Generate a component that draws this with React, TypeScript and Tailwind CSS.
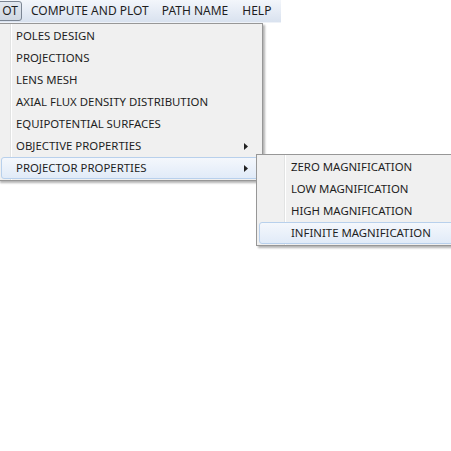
const mainItems = [
  "POLES DESIGN",
  "PROJECTIONS",
  "LENS MESH",
  "AXIAL FLUX DENSITY DISTRIBUTION",
  "EQUIPOTENTIAL SURFACES",
  "OBJECTIVE PROPERTIES",
  "PROJECTOR PROPERTIES",
];

const subItems = ["ZERO MAGNIFICATION", "LOW MAGNIFICATION", "HIGH MAGNIFICATION", "INFINITE MAGNIFICATION"];

function Arrow() {
  return (
    <svg width="4" height="7" viewBox="0 0 4 7" className="shrink-0">
      <path d="M0 0 L4 3.5 L0 7 Z" fill="#222" />
    </svg>
  );
}

export default function App() {
  return (
    <div
      className="relative w-[451px] h-[451px] bg-white overflow-hidden text-[12px] text-[#1e1e1e]"
      style={{ fontFamily: '"Noto Sans", "Liberation Sans", sans-serif' }}
    >
      {/* menu bar */}
      <div className="flex items-center h-[23px] w-[281px] whitespace-nowrap bg-gradient-to-b from-[#f3f6fb] to-[#d9e2ef] border-b border-[#eef2f8]">
        <div className="h-[20px] w-[23px] shrink-0 -ml-[1px] flex items-center justify-end pr-[3px] border border-[#7b8593] rounded-r-[3px] bg-gradient-to-b from-[#e3e8ef] to-[#d0d8e3]">
          OT
        </div>
        <div className="ml-[9px] shrink-0">COMPUTE AND PLOT</div>
        <div className="ml-[13px] shrink-0">PATH NAME</div>
        <div className="ml-[14px] shrink-0">HELP</div>
      </div>

      {/* main dropdown */}
      <div className="absolute left-[-2px] top-[23px] w-[265px] text-[11.4px] bg-[#f0f0f0] border border-[#979797] shadow-[2px_2px_2px_rgba(0,0,0,0.3)] pt-[1px] pb-[1px]">
        <div className="absolute left-[11px] top-0 bottom-0 w-[1px] bg-[#e2e3e3]" />
        <div className="absolute left-[12px] top-0 bottom-0 w-[1px] bg-white" />
        {mainItems.map((t, i) => {
          const active = i === mainItems.length - 1;
          const sub = i >= 5;
          return (
            <div
              key={t}
              className={`relative mx-[2px] h-[22px] flex items-center pl-[14px] pr-[11px] rounded-[3px] border ${
                active ? "border-[#b8d0ec] bg-gradient-to-b from-[#f4f7fc] to-[#e1ebf8]" : "border-transparent"
              }`}
            >
              <span className="flex-1 whitespace-nowrap">{t}</span>
              {sub && <Arrow />}
            </div>
          );
        })}
      </div>

      {/* submenu */}
      <div className="absolute left-[256px] top-[154px] w-[220px] text-[11.4px] bg-[#f0f0f0] border border-[#979797] shadow-[2px_2px_2px_rgba(0,0,0,0.3)] py-[1px]">
        <div className="absolute left-[27px] top-0 bottom-0 w-[1px] bg-[#e2e3e3]" />
        <div className="absolute left-[28px] top-0 bottom-0 w-[1px] bg-white" />
        {subItems.map((t, i) => {
          const active = i === subItems.length - 1;
          return (
            <div
              key={t}
              className={`relative mx-[2px] h-[22px] flex items-center pl-[31px] rounded-[3px] border ${
                active ? "border-[#b8d0ec] bg-gradient-to-b from-[#f4f7fc] to-[#e1ebf8]" : "border-transparent"
              }`}
            >
              <span className="whitespace-nowrap">{t}</span>
            </div>
          );
        })}
      </div>
    </div>
  );
}
